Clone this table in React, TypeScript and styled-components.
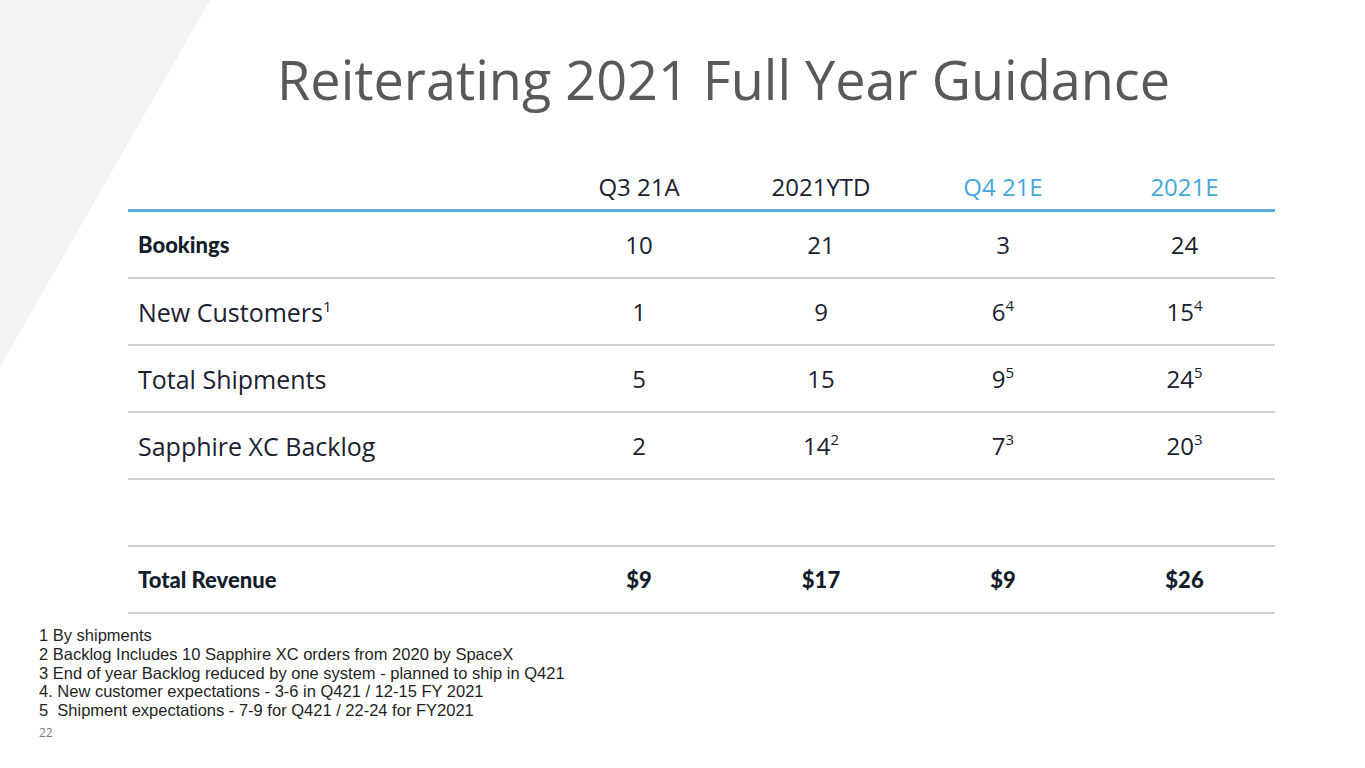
import React from 'react';
import styled, { createGlobalStyle } from 'styled-components';

const GlobalStyle = createGlobalStyle`
  html, body {
    margin: 0;
    padding: 0;
    background: #ffffff;
  }
  body {
    font-family: 'Open Sans', 'Noto Sans', sans-serif;
  }
`;

type Cell = { value: string; sup?: string };
type Row = { label: string; labelSup?: string; strongLabel?: boolean; strongValues?: boolean; cells: Cell[] };

const columns = [
  { title: 'Q3 21A', estimate: false },
  { title: '2021YTD', estimate: false },
  { title: 'Q4 21E', estimate: true },
  { title: '2021E', estimate: true },
];

const rows: Row[] = [
  { label: 'Bookings', strongLabel: true, cells: [{ value: '10' }, { value: '21' }, { value: '3' }, { value: '24' }] },
  {
    label: 'New Customers',
    labelSup: '1',
    cells: [{ value: '1' }, { value: '9' }, { value: '6', sup: '4' }, { value: '15', sup: '4' }],
  },
  {
    label: 'Total Shipments',
    cells: [{ value: '5' }, { value: '15' }, { value: '9', sup: '5' }, { value: '24', sup: '5' }],
  },
  {
    label: 'Sapphire XC Backlog',
    cells: [{ value: '2' }, { value: '14', sup: '2' }, { value: '7', sup: '3' }, { value: '20', sup: '3' }],
  },
  { label: '', cells: [{ value: '' }, { value: '' }, { value: '' }, { value: '' }] },
  {
    label: 'Total Revenue',
    strongLabel: true,
    strongValues: true,
    cells: [{ value: '$9' }, { value: '$17' }, { value: '$9' }, { value: '$26' }],
  },
];

const notes = [
  '1 By shipments',
  '2 Backlog Includes 10 Sapphire XC orders from 2020 by SpaceX',
  '3 End of year Backlog reduced by one system - planned to ship in Q421',
  '4. New customer expectations - 3-6 in Q421 / 12-15 FY 2021',
  '5  Shipment expectations - 7-9 for Q421 / 22-24 for FY2021',
];

const App = () => {
  return (
    <Page>
      <GlobalStyle />
      <Title>Reiterating 2021 Full Year Guidance</Title>
      <GuidanceTable>
        <colgroup>
          <col style={{ width: 420 }} />
          <col style={{ width: 182 }} />
          <col style={{ width: 182 }} />
          <col style={{ width: 182 }} />
          <col style={{ width: 181 }} />
        </colgroup>
        <thead>
          <tr>
            <HeadCell />
            {columns.map((c) => (
              <HeadCell key={c.title} $estimate={c.estimate}>
                {c.title}
              </HeadCell>
            ))}
          </tr>
        </thead>
        <tbody>
          {rows.map((r, i) => (
            <tr key={i}>
              <LabelCell $strong={r.strongLabel}>
                {r.label}
                {r.labelSup && <Sup>{r.labelSup}</Sup>}
              </LabelCell>
              {r.cells.map((c, j) => (
                <ValueCell key={j} $strong={r.strongValues}>
                  {c.value}
                  {c.sup && <Sup>{c.sup}</Sup>}
                </ValueCell>
              ))}
            </tr>
          ))}
        </tbody>
      </GuidanceTable>
      <Notes>
        {notes.map((n) => (
          <NoteLine key={n}>{n}</NoteLine>
        ))}
      </Notes>
      <PageNumber>22</PageNumber>
    </Page>
  );
};

export default App;

const Page = styled.div`
  width: 1365px;
  height: 768px;
  overflow: hidden;
  box-sizing: border-box;
  padding-top: 46px;
  background: linear-gradient(to bottom right, #f1f3f5 50%, transparent 50%) no-repeat 0 0 / 210px 367px,
    #ffffff;
`;

const Title = styled.h1`
  margin: 0 0 52px 277px;
  font-family: 'Open Sans', 'Noto Sans', sans-serif;
  font-weight: 400;
  font-size: 54px;
  line-height: 67px;
  color: #595959;
  white-space: nowrap;
`;

const GuidanceTable = styled.table`
  margin-left: 128px;
  width: 1147px;
  table-layout: fixed;
  border-collapse: separate;
  border-spacing: 0;
  font-family: 'Open Sans', 'Noto Sans', sans-serif;
  color: #1b2130;
`;

const HeadCell = styled.th<{ $estimate?: boolean }>`
  height: 38px;
  padding: 0 0 6px 0;
  vertical-align: bottom;
  text-align: center;
  font-size: 24px;
  font-weight: 400;
  line-height: 32px;
  color: ${(p) => (p.$estimate ? '#45a8dc' : '#1b2130')};
  border-bottom: 3px solid #5daee0;
`;

const LabelCell = styled.td<{ $strong?: boolean }>`
  height: 65px;
  padding: 0 0 0 10px;
  text-align: left;
  vertical-align: middle;
  font-family: ${(p) => (p.$strong ? "'Lato', 'Open Sans', sans-serif" : "'Open Sans', 'Noto Sans', sans-serif")};
  font-size: ${(p) => (p.$strong ? '22px' : '25px')};
  font-weight: ${(p) => (p.$strong ? 900 : 400)};
  color: ${(p) => (p.$strong ? '#141d2b' : '#1b2130')};
  border-bottom: 2px solid #cdd1d6;
  white-space: nowrap;
`;

const ValueCell = styled(LabelCell)`
  padding: 0;
  text-align: center;
  font-size: ${(p) => (p.$strong ? '22px' : '24px')};
`;

const Sup = styled.span`
  font-size: 15px;
  font-weight: 400;
  font-family: 'Open Sans', 'Noto Sans', sans-serif;
  vertical-align: 10px;
  line-height: 0;
`;

const Notes = styled.div`
  margin: 12px 0 0 39px;
  font-family: 'Liberation Sans', Arial, sans-serif;
  font-size: 16.5px;
  line-height: 18.75px;
  color: #1f1f1f;
`;

const NoteLine = styled.div`
  white-space: pre;
`;

const PageNumber = styled.div`
  margin: 6px 0 0 39px;
  font-size: 12px;
  line-height: 14px;
  color: #7a7a7a;
`;
